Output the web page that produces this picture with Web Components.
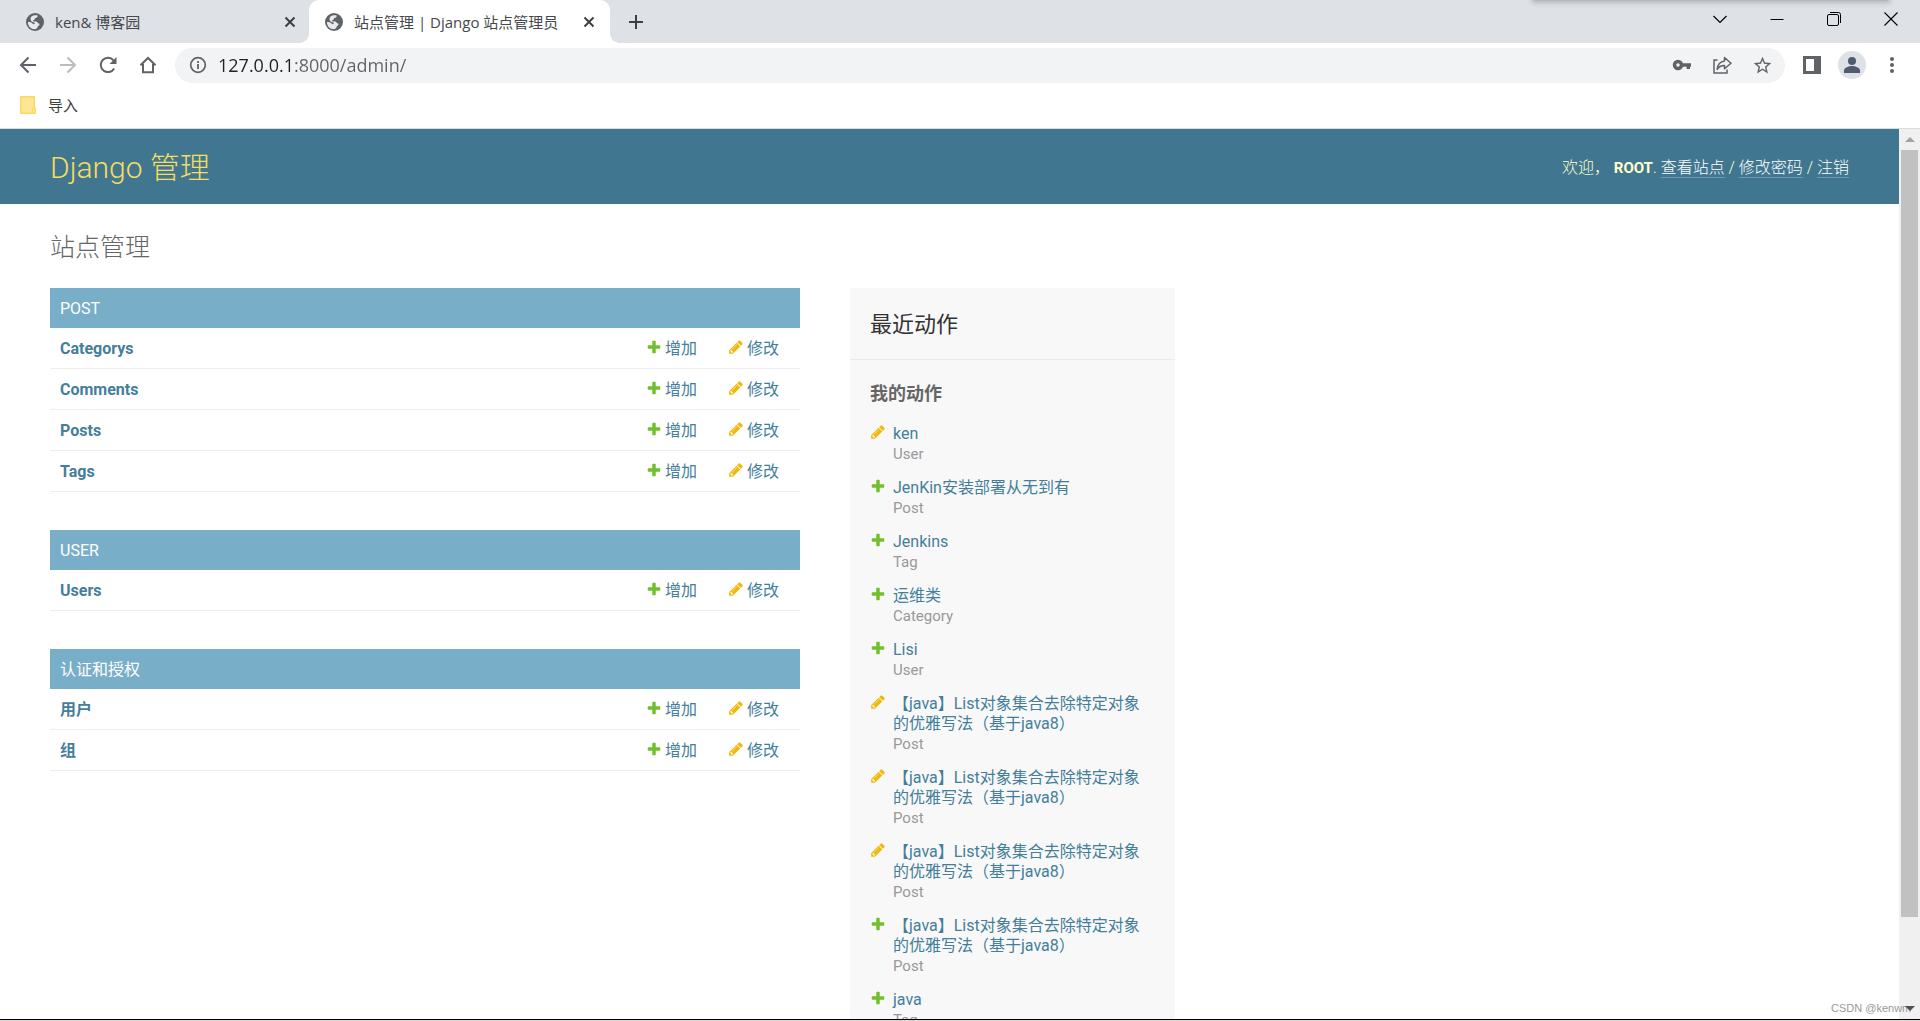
<!DOCTYPE html>
<html lang="zh-CN">
<head>
<meta charset="utf-8">
<title>站点管理 | Django 站点管理员</title>
<style>
  html, body { height: 100%; margin: 0; }
  body { background: #fff; font-family: Roboto, "Noto Sans CJK SC", sans-serif; font-size: 16px; line-height: 20px; color: #333; overflow: hidden; }
</style>
</head>
<body>
<browser-window>
  <browser-tab slot="tabs" label="ken&amp; 博客园"></browser-tab>
  <browser-tab slot="tabs" label="站点管理 | Django 站点管理员" active></browser-tab>
  <browser-toolbar slot="bars"></browser-toolbar>
  <bookmark-bar slot="bars"></bookmark-bar>
  <admin-page>
    <app-module name="Post" models="Categorys,Comments,Posts,Tags"></app-module>
    <app-module name="User" models="Users"></app-module>
    <app-module name="认证和授权" models="用户,组"></app-module>
    <recent-actions slot="aside">
      <action-item kind="change" type="User">ken</action-item>
      <action-item kind="add" type="Post">JenKin安装部署从无到有</action-item>
      <action-item kind="add" type="Tag">Jenkins</action-item>
      <action-item kind="add" type="Category">运维类</action-item>
      <action-item kind="add" type="User">Lisi</action-item>
      <action-item kind="change" type="Post">【java】List对象集合去除特定对象的优雅写法（基于java8）</action-item>
      <action-item kind="change" type="Post">【java】List对象集合去除特定对象的优雅写法（基于java8）</action-item>
      <action-item kind="change" type="Post">【java】List对象集合去除特定对象的优雅写法（基于java8）</action-item>
      <action-item kind="add" type="Post">【java】List对象集合去除特定对象的优雅写法（基于java8）</action-item>
      <action-item kind="add" type="Tag">java</action-item>
    </recent-actions>
  </admin-page>
</browser-window>

<script>
const define = (name, render, setup) => customElements.define(name, class extends HTMLElement {
  connectedCallback() {
    if (this.shadowRoot) return;
    this.attachShadow({ mode: 'open' }).innerHTML = render(this);
    if (setup) setup(this);
  }
});
const attr = (el, n) => (el.getAttribute(n) || '').replace(/&/g, '&amp;').replace(/</g, '&lt;');

/* Icons: [viewBox, markup] */
const ICONS = {
  globe: ['0 0 18 18', '<circle cx="9" cy="9" r="9" fill="#5f6368"/><path d="M5.500 3.600C7 2.300 9.500 1.900 11.600 2.500c.3 1.200-.4 2-1.500 2.200-1 .2-1.300.7-1.300 1.400 0 .8-.7 1.100-1.500 1.200-.5.1-.5.900 0 1 1.200.3 2.900-.1 3.800.8.7.7.9 1.300 1.800 1.400.8.2.9 1.200.2 1.700-.9.600-1.300.9-1.500 1.900-.2 1.200-1.500 2.100-3 2.100C5 16.200 2 13 1.900 9.200c1.500-.3 3.600.2 4.600 1.400.7.900 2 .7 2.300-.1.200-.7-.5-1.200-1.300-1.300C5.600 8.900 4.600 7.600 4.600 6.200c0-1 .2-1.900.9-2.600z" fill="#e8eaed"/>'],
  close: ['0 0 18 18', '<path d="M4.500 4.500l9 9m0-9l-9 9" stroke="#3c4043" stroke-width="2"/>'],
  plus: ['0 0 18 18', '<path d="M9 2v14M2 9h14" stroke="#3c4043" stroke-width="2"/>'],
  back: ['0 0 20 20', '<path d="M18 10H3m7.500-7.500L3 10l7.500 7.500" fill="none" stroke="#5f6368" stroke-width="2"/>'],
  forward: ['0 0 20 20', '<path d="M2 10h15M9.500 2.500L17 10l-7.500 7.500" fill="none" stroke="#babcbe" stroke-width="2"/>'],
  reload: ['0 0 20 20', '<path d="M16.200 13.500A7.200 7.200 0 1 1 15.500 5.300" fill="none" stroke="#5f6368" stroke-width="2"/><path d="M18.500 2v7h-7z" fill="#5f6368"/>'],
  home: ['0 0 20 20', '<path d="M2.500 10.200L10 3l7.500 7.200M5 9v8.200h10V9" fill="none" stroke="#5f6368" stroke-width="2"/>'],
  info: ['0 0 18 18', '<circle cx="9" cy="9" r="7.300" fill="none" stroke="#5f6368" stroke-width="1.700"/><path d="M9 8v5M9 5v2" stroke="#5f6368" stroke-width="1.800"/>'],
  key: ['0 0 20 20', '<circle cx="6" cy="10" r="3.500" fill="none" stroke="#5f6368" stroke-width="3.500"/><path d="M9.500 10h9.500M16.300 9v5" stroke="#5f6368" stroke-width="3.400"/>'],
  share: ['0 0 20 20', '<path d="M5.500 5H2v13h13v-3.500" fill="none" stroke="#5f6368" stroke-width="1.500"/><path d="M12.500 2.500l6.500 5.700-6.500 5.600v-3.400c-3-.1-5.300.9-7.300 4C5.700 10 8 6.600 12.500 6z" fill="none" stroke="#5f6368" stroke-width="1.500" stroke-linejoin="round"/>'],
  star: ['0 0 24 24', '<path d="M22 9.240l-7.190-.62L12 2 9.190 8.630 2 9.240l5.460 4.730L5.820 21 12 17.270 18.180 21l-1.630-7.030L22 9.240zM12 15.400l-3.760 2.270 1-4.280-3.320-2.880 4.380-.38L12 6.100l1.710 4.040 4.380.38-3.320 2.880 1 4.280L12 15.400z" fill="#5f6368"/>'],
  panel: ['0 0 18 18', '<path d="M0 0h18v18H0zM3 3v12h8V3z" fill="#5f6368" fill-rule="evenodd"/>'],
  person: ['0 0 28 28', '<circle cx="14" cy="14" r="14" fill="#dee1e6"/><circle cx="14" cy="10" r="4" fill="#4f5b6e"/><path d="M6 22v-2.500C6 16.500 11 15 14 15s8 1.500 8 4.500V22z" fill="#4f5b6e"/>'],
  dots: ['0 0 18 18', '<g fill="#5f6368"><circle cx="9" cy="3" r="2"/><circle cx="9" cy="9" r="2"/><circle cx="9" cy="15" r="2"/></g>'],
  folder: ['0 0 16 18', '<path d="M1 0h13q1 0 1 1v10.500l1 1V17q0 1-1 1H1q-1 0-1-1V1q0-1 1-1z" fill="#ffd95c"/><path d="M1.500 1.500h12V11L12 12.500v4H1.500z" fill="#ffe694"/><path d="M13 13h1.500v3.500H13z" fill="#ffe694"/>'],
  chevron: ['0 0 14 14', '<path d="M.5 4L7 10.500 13.500 4" fill="none" stroke="#000" stroke-width="1.200"/>'],
  minimize: ['0 0 14 14', '<path d="M.5 7.500h13" stroke="#000"/>'],
  restore: ['0 0 14 14', '<rect x=".5" y="2.500" width="11" height="11" rx="1.500" fill="none" stroke="#000"/><path d="M3 .5h8.500q2 0 2 2V11" fill="none" stroke="#000"/>'],
  winclose: ['0 0 14 14', '<path d="M.5.500l13 13m0-13l-13 13" stroke="#000" stroke-width="1.100"/>'],
  add: ['0 0 1792 1792', '<path fill="#70bf2b" d="M1600 796v192q0 40-28 68t-68 28h-416v416q0 40-28 68t-68 28h-192q-40 0-68-28t-28-68v-416h-416q-40 0-68-28t-28-68v-192q0-40 28-68t68-28h416v-416q0-40 28-68t68-28h192q40 0 68 28t28 68v416h416q40 0 68 28t28 68z"/>'],
  change: ['0 0 1792 1792', '<path fill="#efb80b" d="M491 1536l91-91-235-235-91 91v107h128v128h107zm523-928q0-22-22-22-10 0-17 7l-542 542q-7 7-7 17 0 22 22 22 10 0 17-7l542-542q7-7 7-17zm-54-192l416 416-832 832h-416v-416zm683 96q0 53-37 90l-166 166-416-416 166-165q36-38 90-38 53 0 91 38l235 234q37 39 37 91z"/>']
};

define('ui-icon', el => {
  const [box, art] = ICONS[el.getAttribute('name')];
  const w = el.getAttribute('size') || 18;
  return `<style>:host{display:inline-flex;flex:none}svg{display:block}</style>
    <svg viewBox="${box}" width="${w}" height="${el.getAttribute('tall') || w}" aria-hidden="true">${art}</svg>`;
});

define('browser-window', () => `
  <style>
    :host { display: flex; flex-direction: column; height: 100vh; box-sizing: border-box; }
    .strip { display: flex; align-items: stretch; height: 43px; flex: none; background: #dee1e6; position: relative; }
    .shade { position: absolute; top: -4px; right: 32px; width: 354px; height: 5px; background: #b4b7bc; box-shadow: 0 0 5px 2px #b4b7bc; }
    .new { width: 52px; }
    .controls { display: flex; margin-left: auto; height: 37px; padding-right: 1px; }
    .controls button { width: 57px; }
    button { border: 0; padding: 0; background: none; display: flex; align-items: center; justify-content: center; }
    main { flex: 1; min-height: 0; border-top: 1px solid #d9dbde; display: flex; }
    ::slotted(admin-page) { flex: 1; min-width: 0; }
    .edge { height: 1px; flex: none; background: #000; border-bottom: 1px solid #dcd8cf; }
  </style>
  <div class="strip">
    <div class="shade"></div>
    <slot name="tabs"></slot>
    <button class="new" aria-label="新标签页"><ui-icon name="plus"></ui-icon></button>
    <div class="controls">
      <button aria-label="搜索标签页"><ui-icon name="chevron" size="14"></ui-icon></button>
      <button aria-label="最小化"><ui-icon name="minimize" size="14"></ui-icon></button>
      <button aria-label="还原"><ui-icon name="restore" size="14"></ui-icon></button>
      <button aria-label="关闭"><ui-icon name="winclose" size="14"></ui-icon></button>
    </div>
  </div>
  <slot name="bars"></slot>
  <main><slot></slot><page-scrollbar></page-scrollbar></main>
  <div class="edge"></div>`);

define('browser-tab', el => `
  <style>
    :host { display: flex; align-items: center; gap: 11px; box-sizing: border-box; width: 301px; padding: 0 12px 0 16px; position: relative;
      font: 15px/20px "Open Sans", "Noto Sans CJK SC", sans-serif; color: #45484c; }
    :host(:not([active])) { width: 309px; padding: 0 10px 0 26px; }
    :host([active]) { background: #fff; border-radius: 10px 10px 0 0; }
    :host([active])::before, :host([active])::after { content: ""; position: absolute; bottom: 0; width: 10px; height: 10px; }
    :host([active])::before { left: -10px; background: radial-gradient(circle at 0 0, transparent 10px, #fff 10px); }
    :host([active])::after { right: -10px; background: radial-gradient(circle at 100% 0, transparent 10px, #fff 10px); }
    span { flex: 1; white-space: nowrap; overflow: hidden; }
    button { border: 0; padding: 0; background: none; display: flex; }
  </style>
  <ui-icon name="globe"></ui-icon><span>${attr(el, 'label')}</span>
  <button aria-label="关闭标签页"><ui-icon name="close"></ui-icon></button>`);

define('browser-toolbar', () => `
  <style>
    :host { display: flex; align-items: center; height: 44px; flex: none; padding: 0 8px; background: #fff; }
    button { width: 40px; height: 34px; border: 0; padding: 0; background: none; display: flex; align-items: center; justify-content: center; flex: none; }
    .omni { flex: 1; min-width: 0; height: 35px; margin: 0 7px; border-radius: 18px; background: #f1f3f4; display: flex; align-items: center; padding: 0 3px; }
    input { flex: 1; min-width: 0; border: 0; outline: 0; padding: 0; height: 30px; font: 18px/30px "Open Sans", "Noto Sans CJK SC", sans-serif; color: #5f6368;
      background: linear-gradient(90deg, #202124 var(--host-width, 78px), #5f6368 0) 0 0 / 100% 100%; -webkit-background-clip: text; background-clip: text; -webkit-text-fill-color: transparent; }
  </style>
  <button aria-label="后退"><ui-icon name="back" size="20"></ui-icon></button>
  <button aria-label="前进"><ui-icon name="forward" size="20"></ui-icon></button>
  <button aria-label="重新加载"><ui-icon name="reload" size="20"></ui-icon></button>
  <button aria-label="主页"><ui-icon name="home" size="20"></ui-icon></button>
  <div class="omni">
    <button aria-label="查看网站信息"><ui-icon name="info"></ui-icon></button>
    <input type="text" aria-label="地址栏" value="127.0.0.1:8000/admin/" spellcheck="false">
    <button aria-label="密码"><ui-icon name="key" size="20"></ui-icon></button>
    <button aria-label="分享"><ui-icon name="share" size="20"></ui-icon></button>
    <button aria-label="收藏"><ui-icon name="star" size="21"></ui-icon></button>
  </div>
  <button aria-label="侧边栏"><ui-icon name="panel"></ui-icon></button>
  <button aria-label="用户"><ui-icon name="person" size="28"></ui-icon></button>
  <button aria-label="菜单"><ui-icon name="dots"></ui-icon></button>`, el => {
  /* The host part of the address is darker than its port and path. */
  const input = el.shadowRoot.querySelector('input');
  const pen = document.createElement('canvas').getContext('2d');
  pen.font = '18px "Open Sans"';
  input.style.setProperty('--host-width', Math.round(pen.measureText(input.value.split(':')[0]).width) + 'px');
});

define('bookmark-bar', () => `
  <style>
    :host { display: flex; align-items: center; height: 36px; padding: 0 20px 5px; flex: none; background: #fff; }
    a { display: flex; align-items: center; gap: 12px; font: 15px/20px "Open Sans", "Noto Sans CJK SC", sans-serif; color: #3c4043; text-decoration: none; }
  </style>
  <a href="#"><ui-icon name="folder" size="16" tall="18"></ui-icon>导入</a>`);

define('page-scrollbar', () => `
  <style>
    :host { display: flex; flex-direction: column; width: 21px; flex: none; background: #f0f0f0; position: relative; }
    .end { height: 21px; flex: none; display: flex; align-items: center; justify-content: center; }
    i { border: 5px solid transparent; border-top: 0; border-bottom-color: #a3a3a3; }
    .down i { border-bottom: 0; border-top: 5px solid #505050; z-index: 1; }
    .track { flex: 1; display: flex; flex-direction: column; padding: 0 2px; }
    .thumb { flex: 19; background: #c1c1c1; }
    .rest { flex: 2; }
    .mark { position: absolute; left: -68px; bottom: 1px; font: 11px/20px "Liberation Sans", sans-serif; color: #999; white-space: nowrap; }
  </style>
  <div class="end"><i></i></div>
  <div class="track"><div class="thumb"></div><div class="rest"></div></div>
  <div class="end down"><i></i></div>
  <span class="mark">CSDN @kenwm</span>`);

define('admin-page', () => `
  <style>
    :host { display: block; overflow: hidden; background: #fff; }
    header { display: flex; align-items: center; justify-content: space-between; height: 75px; box-sizing: border-box; padding: 2px 50px 0; background: #417690; color: #ffc; }
    .brand { margin: 0; font-size: 30px; line-height: 40px; font-weight: 300; }
    .brand a { color: #f5dd5d; text-decoration: none; }
    nav { font-size: 16px; font-weight: 300; line-height: 20px; }
    nav a { color: #fff; text-decoration: none; border-bottom: 1px solid rgba(255,255,255,.25); }
    strong { font-size: 15px; font-weight: 700; }
    .content { padding: 28px 50px; }
    h1 { margin: 0 0 24px; font-size: 25px; line-height: 32px; font-weight: 300; color: #666; }
    .columns { display: flex; align-items: flex-start; gap: 50px; }
    .apps { display: flex; flex-direction: column; gap: 38px; width: 750px; }
  </style>
  <header>
    <div class="brand"><a href="#">Django 管理</a></div>
    <nav>欢迎， <strong>ROOT</strong>. <a href="#">查看站点</a> / <a href="#">修改密码</a> / <a href="#">注销</a></nav>
  </header>
  <div class="content">
    <h1>站点管理</h1>
    <div class="columns"><div class="apps"><slot></slot></div><slot name="aside"></slot></div>
  </div>`);

define('app-module', el => `
  <style>
    :host { display: block; }
    table { width: 100%; border-collapse: collapse; table-layout: fixed; }
    caption { height: 40px; box-sizing: border-box; padding: 11px 10px 9px; background: #79aec8; text-align: left; font-size: 16px; line-height: 20px; font-weight: 400; text-transform: uppercase; }
    caption a { color: #fff; }
    th, td { height: 38px; box-sizing: content-box; padding: 2px 0 0 10px; border-bottom: 1px solid #eee; text-align: left; font-size: 16px; line-height: 20px; }
    th { font-weight: 700; }
    td { width: 72px; font-weight: 400; }
    a { color: #447e9b; text-decoration: none; }
    td a { display: flex; align-items: center; gap: 3px; }
    ui-icon { margin-bottom: 4px; }
  </style>
  <table>
    <caption><a href="#">${attr(el, 'name')}</a></caption>
    <tbody>${attr(el, 'models').split(',').map(m => `
      <tr><th scope="row"><a href="#">${m}</a></th>
        <td><a href="#"><ui-icon name="add" size="16"></ui-icon>增加</a></td>
        <td><a href="#"><ui-icon name="change" size="16"></ui-icon>修改</a></td></tr>`).join('')}
    </tbody>
  </table>`);

define('recent-actions', () => `
  <style>
    :host { display: block; width: 325px; flex: none; background: #f8f8f8; }
    h2 { margin: 0; padding: 21px 20px 19px; border-bottom: 1px solid #eaeaea; font-size: 22px; line-height: 31px; font-weight: 400; color: #333; }
    h3 { margin: 0; padding: 24px 20px 20px; font-size: 18px; line-height: 20px; font-weight: 700; color: #666; }
    .list { display: flex; flex-direction: column; gap: 14px; padding: 0 28px 20px 20px; }
  </style>
  <h2>最近动作</h2><h3>我的动作</h3>
  <div class="list" role="list"><slot></slot></div>`);

define('action-item', el => `
  <style>
    :host { display: flex; align-items: flex-start; gap: 7px; font-size: 16px; line-height: 20px; }
    a { display: block; color: #447e9b; text-decoration: none; }
    small { display: block; font-size: 15px; line-height: 20px; color: #999; }
    a, small { font-weight: 400; }
  </style>
  <ui-icon name="${attr(el, 'kind')}" size="16"></ui-icon>
  <div><a href="#"><slot></slot></a><small>${attr(el, 'type')}</small></div>`, el => el.setAttribute('role', 'listitem'));
</script>
</body>
</html>
